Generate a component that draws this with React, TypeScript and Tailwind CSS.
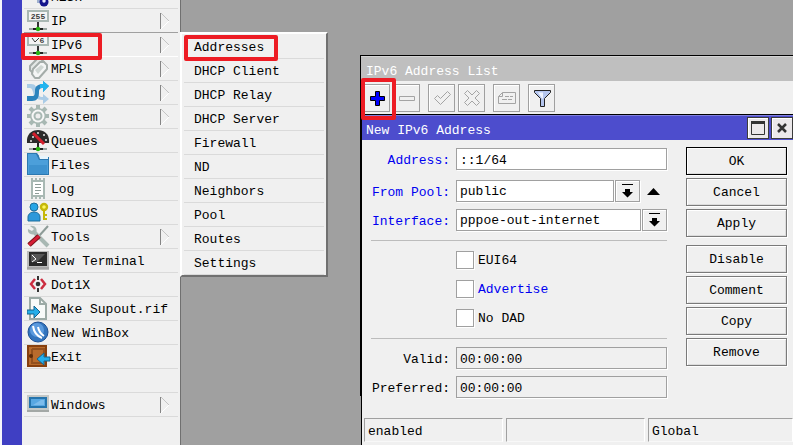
import type { ReactNode } from "react";
import clsx from "clsx";

const icons: Record<string, ReactNode> = {
  mesh: (
    <>
      <path d="M10 12h8v6h-8z" fill="#9fb0cf" />
      <circle cx="17" cy="17" r="4.5" fill="#14148c" />
      <circle cx="17" cy="16" r="1.7" fill="#e8e8ff" />
    </>
  ),
  ip: (
    <>
      <rect x="0" y="1" width="22" height="12" fill="#a9b7b3" />
      <rect x="2" y="3" width="18" height="8" fill="#f4f4f4" />
      <text x="11" y="10" fontSize="8" fontWeight="700" textAnchor="middle" fill="#3c3c3c">
        255
      </text>
      <path d="M11 13v6" stroke="#333" strokeWidth="2" />
      <path d="M2 20h18" stroke="#9aa5a2" strokeWidth="2" />
      <path d="M6 20h10" stroke="#222" strokeWidth="2" />
      <circle cx="11" cy="20" r="2.2" fill="#27b512" />
    </>
  ),
  ipv6: (
    <>
      <rect x="0" y="1" width="22" height="12" fill="#a9b7b3" />
      <rect x="2" y="2" width="18" height="9" fill="#f4f4f4" />
      <path d="M5 5l3 4 4-4" fill="none" stroke="#3c3c3c" />
      <text x="15" y="10" fontSize="8" fontWeight="700" textAnchor="middle" fill="#3c3c3c">
        6
      </text>
      <path d="M11 13v6" stroke="#333" strokeWidth="2" />
      <path d="M2 20h18" stroke="#9aa5a2" strokeWidth="2" />
      <path d="M6 20h10" stroke="#222" strokeWidth="2" />
      <circle cx="11" cy="20" r="2.2" fill="#27b512" />
    </>
  ),
  mpls: (
    <g strokeLinejoin="round">
      <path d="M3 9l7-7h4l3 3v4l-7 7H6l-3-3z" fill="#e4e8e6" stroke="#a4aca9" strokeWidth="2" />
      <path d="M6 12l7-7h4l3 3v4l-8 9H8l-3-4z" fill="#f4f5f5" stroke="#a4aca9" strokeWidth="2" />
      <path d="M8 13l3 4 6-7-3-2z" fill="#cfd6d3" />
    </g>
  ),
  routing: (
    <>
      <path d="M0 3h4c5 0 5 3 6 7s2 6 6 6v-3l6 5-6 5v-4c-7 0-9-3-10-8-1-3-1-4-4-4H0z" fill="#a9cbe6" />
      <path d="M0 15h5c3 0 3-2 3-5 0-5 3-7 8-7V0l6 5-6 6V7c-3 0-4 1-4 4 0 6-2 9-7 9H0z" fill="#2a83bd" />
      <path d="M16 0l6 5-6 6V7h-3V3h3z" fill="#22b5ef" />
    </>
  ),
  system: (
    <>
      <g stroke="#a8b8b3" strokeWidth="4">
        <path d="M11 0v22M0 11h22M3 3l16 16M19 3L3 19" />
      </g>
      <circle cx="11" cy="11" r="8" fill="#a8b8b3" />
      <circle cx="11" cy="11" r="6.5" fill="#f8f8f8" />
      <circle cx="11" cy="11" r="3.5" fill="#eee" stroke="#a8b8b3" strokeWidth="2" />
    </>
  ),
  queues: (
    <>
      <path d="M0 14C-1 5 5 1 11 1s12 4 11 13z" fill="#2b2b2b" />
      <path d="M5 8h2M10 4h2M16 6h2M18 11h2M3 12h2" stroke="#b8b8b8" strokeWidth="2" />
      <path d="M6 4l11 11" stroke="#d51f2d" strokeWidth="3" />
      <path d="M11 14v6" stroke="#222" strokeWidth="2" />
      <path d="M2 20h18" stroke="#9aa5a2" strokeWidth="2" />
      <path d="M6 20h10" stroke="#222" strokeWidth="2" />
      <circle cx="11" cy="20" r="2.2" fill="#27b512" />
    </>
  ),
  files: (
    <>
      <path d="M0 0h10l3 4h9v18H0z" fill="#2c78b0" />
      <path d="M1 1h8l3 6h9v14H1z" fill="#4c9fda" />
      <path d="M12 3l1 3h8V3z" fill="#e8f5fd" />
      <path d="M2 12h18v9H2z" fill="#368ac8" opacity=".6" />
    </>
  ),
  log: (
    <>
      <path d="M4 1h2v2h2V1h2v2h2V1h2v2h2V1h2v21h-2v-2h-2v2h-2v-2h-2v2H8v-2H6v2H4z" fill="#a8b8b3" />
      <path d="M6 5h10v13H6z" fill="#fff" />
      <path d="M8 7.5h6M8 10.5h6M8 13.5h6M8 16.5h4" stroke="#8e9c98" />
    </>
  ),
  radius: (
    <>
      <circle cx="7" cy="6" r="4" fill="#27a5e6" stroke="#1c6e9d" />
      <path d="M1 20v-4c0-3 3-5 6-5s6 2 6 5v4z" fill="#2d98da" stroke="#1c6e9d" />
      <circle cx="17" cy="6" r="3" fill="#fff75a" stroke="#c5b80b" strokeWidth="2.4" />
      <path d="M17 10v9M17 14h3M17 18h3" stroke="#c5b80b" strokeWidth="2" />
    </>
  ),
  tools: (
    <>
      <path d="M21 1l-9 10" stroke="#8d9b97" strokeWidth="2" />
      <path d="M6 6l15 15" stroke="#a8b8b3" strokeWidth="4" />
      <path d="M3 1c5-1 8 3 6 7-3 3-9 1-8-4l4 2 2-2z" fill="#a8b8b3" />
      <path d="M12 11L2 20" stroke="#7a1219" strokeWidth="5" />
      <path d="M12 11L2 20" stroke="#d61e36" strokeWidth="3" />
    </>
  ),
  terminal: (
    <>
      <rect x="0" y="2" width="22" height="19" fill="#bcbcbc" />
      <rect x="0" y="18" width="22" height="2" fill="#a5a5a5" />
      <rect x="2" y="3" width="18" height="14" fill="#2b2b2b" />
      <path d="M4 5h14l-8 8H4z" fill="#555" />
      <path d="M5 6l4 4-4 3M10 13.5h5" fill="none" stroke="#fff" />
    </>
  ),
  dot1x: (
    <>
      <path d="M8 6l-4 5 4 5M14 6l4 5-4 5" fill="none" stroke="#cc2d40" strokeWidth="2.5" />
      <path d="M11 3v4M11 15v4" stroke="#333" strokeWidth="2" />
      <circle cx="11" cy="11" r="2.3" fill="#333" />
    </>
  ),
  supout: (
    <>
      <path d="M3 1h10l6 6v15H3z" fill="#f8faf9" stroke="#9caaa6" strokeWidth="2" />
      <path d="M13 1v6h6" fill="none" stroke="#9caaa6" strokeWidth="2" />
      <path d="M0 13h7V9l6 6-6 6v-4H0z" fill="#25aee9" stroke="#17628c" />
    </>
  ),
  winbox: (
    <>
      <circle cx="11" cy="11" r="10" fill="#3274bd" stroke="#1d4f94" />
      <circle cx="10" cy="9" r="7" fill="#5b9ade" />
      <path d="M6 5c1 7 4 10 9 12M11 6c1 5 3 7 6 9" fill="none" stroke="#fff" strokeWidth="2" />
    </>
  ),
  exit: (
    <>
      <rect x="1" y="1" width="18" height="20" fill="#b86b2c" stroke="#87400e" strokeWidth="2" />
      <path d="M5 4h12v7M5 4v14h10" fill="none" stroke="#93501d" strokeWidth="2" />
      <circle cx="4" cy="11" r="2" fill="#5d2b08" />
      <path d="M23 12h-6V8l-7 6 7 6v-4h6z" fill="#25aee9" stroke="#17628c" />
    </>
  ),
  windows: (
    <>
      <rect x="0" y="2" width="22" height="17" fill="#c4c8c7" />
      <rect x="0" y="17" width="22" height="2" fill="#a3a8a6" />
      <rect x="2" y="4" width="18" height="11" fill="#2574ad" />
      <rect x="4" y="6" width="14" height="7" fill="#58a7e2" />
      <path d="M6 12l8-5h3v5z" fill="#7dbcec" />
    </>
  ),
};

interface MenuEntry {
  label: string;
  icon?: string;
  sub?: boolean;
}

const menu: MenuEntry[] = [
  { label: "MESH", icon: "mesh" },
  { label: "IP", icon: "ip", sub: true },
  { label: "IPv6", icon: "ipv6", sub: true },
  { label: "MPLS", icon: "mpls", sub: true },
  { label: "Routing", icon: "routing", sub: true },
  { label: "System", icon: "system", sub: true },
  { label: "Queues", icon: "queues" },
  { label: "Files", icon: "files" },
  { label: "Log", icon: "log" },
  { label: "RADIUS", icon: "radius" },
  { label: "Tools", icon: "tools", sub: true },
  { label: "New Terminal", icon: "terminal" },
  { label: "Dot1X", icon: "dot1x" },
  { label: "Make Supout.rif", icon: "supout" },
  { label: "New WinBox", icon: "winbox" },
  { label: "Exit", icon: "exit" },
  { label: "" },
  { label: "Windows", icon: "windows", sub: true },
];

const submenu = [
  "Addresses",
  "DHCP Client",
  "DHCP Relay",
  "DHCP Server",
  "Firewall",
  "ND",
  "Neighbors",
  "Pool",
  "Routes",
  "Settings",
];

function Sidebar() {
  return (
    <nav className="flex w-[181px] shrink-0 border-r border-[#707070] bg-[#f0f0f0]">
      <div className="w-[22px] shrink-0 border-l-2 border-[#f5f5fb] bg-[#3f3fc3]" />
      <ul className="-mt-[15px] min-w-0 flex-1 px-0.5">
        {menu.map((m, i) => (
          <li
            key={i}
            className={clsx(
              "h-6 border-b",
              m.label === "IP" ? "border-[#a0a0a0]" : m.label === "IPv6" ? "border-white" : "border-[#dadada]"
            )}
          >
            {m.icon && (
              <button className="flex h-full w-full items-center pl-[3px] pr-2 text-left">
                <svg width="24" height="23" viewBox="0 0 24 23" className="shrink-0" aria-hidden>
                  {icons[m.icon]}
                </svg>
                <span className="flex-1 whitespace-nowrap pt-[3px]">{m.label}</span>
                {m.sub && (
                  <svg width="10" height="18" viewBox="0 0 10 18" className="shrink-0" aria-hidden>
                    <path d="M1 1l8 8-8 8" fill="none" stroke="#fff" />
                    <path d="M1 1l8 8" stroke="#c4c4c4" />
                    <path d="M.5 1v16" stroke="#858585" />
                  </svg>
                )}
              </button>
            )}
          </li>
        ))}
      </ul>
    </nav>
  );
}

function Submenu() {
  return (
    <ul className="absolute left-[180px] top-8 w-[148px] border-2 border-b-[#707070] border-l-white border-r-[#707070] border-t-white bg-[#f0f0f0] px-0.5 pt-px">
      {submenu.map((label) => (
        <li key={label} className="h-6 border-b border-[#dadada]">
          <button className="flex h-full w-full items-center pl-[10px] pt-0.5 text-left">{label}</button>
        </li>
      ))}
    </ul>
  );
}

function ToolButton({ label, className, children }: { label: string; className?: string; children: ReactNode }) {
  return (
    <button
      aria-label={label}
      className={clsx(
        "flex h-7 w-[27px] items-center justify-center border border-[#a0a0a0] shadow-[inset_1px_1px_0_#fff]",
        className
      )}
    >
      <svg width="20" height="20" viewBox="0 0 20 20" fill="none" stroke="#a4a4a4" aria-hidden>
        {children}
      </svg>
    </button>
  );
}

function ListWindow() {
  return (
    <section className="absolute left-[360px] right-0 top-[55px] min-h-[341px] border-l border-t border-black bg-[#f0f0f0]">
      <h2 className="flex h-[25px] items-center border-t border-[#d4d4d4] bg-[#bfbfbf] pl-[5px] pt-1.5 text-white">
        IPv6 Address List
      </h2>
      <div className="flex py-[3px] pl-0.5">
        <ToolButton label="Add">
          <path d="M8.5 3.5h4v5h5v4h-5v5h-4v-5h-5v-4h5z" fill="#00f" stroke="#000" />
        </ToolButton>
        <ToolButton label="Remove" className="ml-[3px]">
          <path d="M2.5 8.5h15v4h-15z" />
        </ToolButton>
        <ToolButton label="Enable" className="ml-2">
          <path d="M2.5 10.5l3-3 3 3 7-7 3 3-10 10z" />
        </ToolButton>
        <ToolButton label="Disable" className="ml-[3px]">
          <path d="M5.5 2.5l4.5 4.5 4.5-4.500 3 3-4.500 4.500 4.500 4.500-3 3-4.500-4.500-4.500 4.500-3-3 4.500-4.500-4.500-4.500z" />
        </ToolButton>
        <ToolButton label="Comment" className="ml-2">
          <path d="M5.5 4.5h13v11h-17v-7zM5.5 4.5v4h-4M8 8.5h4M13 8.5h3M5 11.5h5M11 11.5h4" />
        </ToolButton>
        <ToolButton label="Filter" className="ml-2">
          <path d="M2.5 2.5h16v2l-6 6v8h-4v-8l-6-6z" fill="#b4c5ee" stroke="#222" />
          <path d="M6 4.5h5v6h-1z" fill="#eef3ff" stroke="none" />
        </ToolButton>
      </div>
    </section>
  );
}

const field = "h-[22px] min-w-0 border border-[#a0a0a0] px-[3px] pt-0.5 shadow-[1px_1px_0_#fff]";

function Row({ id, label, blue, children }: { id: string; label: string; blue?: boolean; children: ReactNode }) {
  return (
    <div className="flex items-center gap-[6px]">
      <label htmlFor={id} className={clsx("w-[79px] shrink-0 whitespace-nowrap pt-[3px] text-right", blue && "text-[#0000f0]")}>
        {label}:
      </label>
      {children}
    </div>
  );
}

function DropButton({ label }: { label: string }) {
  return (
    <button
      aria-label={label}
      className="ml-px flex h-[22px] w-[25px] shrink-0 items-center justify-center border border-[#a0a0a0] shadow-[inset_1px_1px_0_#fff,1px_1px_0_#fff]"
    >
      <svg width="13" height="14" viewBox="0 0 13 14" aria-hidden>
        <path d="M1 0h11v1H1zM4 5h5v3h3l-5.5 5.5L1 8h3z" />
      </svg>
    </button>
  );
}

function Check({ label, blue }: { label: string; blue?: boolean }) {
  return (
    <label className={clsx("flex items-center gap-1", blue && "text-[#0000f0]")}>
      <input
        type="checkbox"
        className="size-[18px] appearance-none border border-[#a0a0a0] bg-white shadow-[1px_1px_0_#fff] checked:bg-[#4d4dcd]"
      />
      <span className="pt-0.5">{label}</span>
    </label>
  );
}

function ActionButton({ children, className }: { children: string; className?: string }) {
  return (
    <button
      className={clsx(
        "h-7 border pt-0.5 shadow-[inset_1px_1px_0_#fff,inset_-1px_-1px_0_#dcdcdc,1px_1px_0_#fff]",
        className ?? "border-[#7a7a7a]"
      )}
    >
      {children}
    </button>
  );
}

const windowButton =
  "flex size-[22px] items-center justify-center border border-[#3c3c3c] bg-[#ebe8ea] shadow-[inset_1px_1px_0_#fff]";

function AddressDialog() {
  return (
    <section className="absolute bottom-0 left-[361px] right-0 top-[114px] flex flex-col border-l border-t border-black bg-[#f0f0f0]">
      <header className="flex h-[25px] shrink-0 items-center gap-0.5 border-t border-[#8080dd] bg-[#4d4dcd] pl-1 text-white">
        <h2 className="flex-1 pt-1.5">New IPv6 Address</h2>
        <button aria-label="Maximize" className={windowButton}>
          <svg width="14" height="14" viewBox="0 0 14 14" aria-hidden>
            <path d="M.5.5h13v13H.5z" fill="none" stroke="#333" />
            <path d="M0 0h14v3H0z" fill="#333" />
          </svg>
        </button>
        <button aria-label="Close" className={windowButton}>
          <svg width="12" height="12" viewBox="0 0 12 12" aria-hidden>
            <path d="M2 2l8 8M10 2l-8 8" stroke="#333" strokeWidth="2.5" />
          </svg>
        </button>
      </header>

      <div className="flex gap-[19px] pl-[9px] pr-[6px] pt-[7px]">
        <form className="flex min-w-0 flex-1 flex-col gap-[7px] pt-px">
          <Row id="address" label="Address" blue>
            <input id="address" defaultValue="::1/64" className={clsx(field, "flex-1 bg-white")} />
          </Row>
          <div className="mt-[3px]">
            <Row id="pool" label="From Pool" blue>
              <div className="flex min-w-0 flex-1">
                <select id="pool" className={clsx(field, "flex-1 appearance-none bg-white")}>
                  <option>public</option>
                </select>
                <DropButton label="Open pool list" />
                <button aria-label="Clear pool" className="flex w-[27px] items-center justify-center">
                  <svg width="13" height="7" viewBox="0 0 13 7" aria-hidden>
                    <path d="M0 7L6.5 0 13 7z" />
                  </svg>
                </button>
              </div>
            </Row>
          </div>
          <Row id="interface" label="Interface" blue>
            <div className="flex min-w-0 flex-1">
              <select id="interface" className={clsx(field, "flex-1 appearance-none bg-white")}>
                <option>pppoe-out-internet</option>
              </select>
              <DropButton label="Open interface list" />
            </div>
          </Row>
          <hr className="mt-0.5 border-[#bcbcbc]" />
          <div className="mt-[3px] flex flex-col gap-[11px] pl-[85px]">
            <Check label="EUI64" />
            <Check label="Advertise" blue />
            <Check label="No DAD" />
          </div>
          <hr className="mt-1 border-[#bcbcbc]" />
          <div className="mt-px flex flex-col gap-[7px]">
            <Row id="valid" label="Valid">
              <input id="valid" readOnly value="00:00:00" className={clsx(field, "flex-1")} />
            </Row>
            <Row id="preferred" label="Preferred">
              <input id="preferred" readOnly value="00:00:00" className={clsx(field, "flex-1")} />
            </Row>
          </div>
        </form>

        <div className="flex w-[101px] shrink-0 flex-col gap-[3px]">
          <ActionButton className="border-black">OK</ActionButton>
          <ActionButton>Cancel</ActionButton>
          <ActionButton>Apply</ActionButton>
          <div className="mt-[5px] flex flex-col gap-[3px]">
            <ActionButton>Disable</ActionButton>
            <ActionButton>Comment</ActionButton>
            <ActionButton>Copy</ActionButton>
            <ActionButton>Remove</ActionButton>
          </div>
        </div>
      </div>

      <footer className="mt-5 grid grid-cols-[139px_139px_1fr] gap-[3px] pl-0.5">
        {["enabled", "", "Global"].map((text, i) => (
          <div key={i} className="flex h-6 items-center border border-b-[#f8f8f8] border-l-[#a0a0a0] border-r-white border-t-[#a0a0a0] pl-[3px] pt-1">
            {text}
          </div>
        ))}
      </footer>
    </section>
  );
}

export default function App() {
  return (
    <main className="relative flex h-screen overflow-hidden bg-[#a0a0a0] font-['Liberation_Mono',monospace] text-[13px] leading-4 text-black">
      <Sidebar />
      <Submenu />
      <ListWindow />
      <AddressDialog />

      {/* Callouts for the three steps */}
      <div className="pointer-events-none absolute left-[21px] top-[33px] h-[27px] w-[81px] rounded-xs border-4 border-[#ed1c24]" />
      <div className="pointer-events-none absolute left-[184px] top-[35px] h-[26px] w-[94px] rounded-xs border-4 border-[#ed1c24]" />
      <div className="pointer-events-none absolute left-[361px] top-[78px] h-[42px] w-[35px] rounded-xs border-4 border-[#ed1c24]" />
    </main>
  );
}
